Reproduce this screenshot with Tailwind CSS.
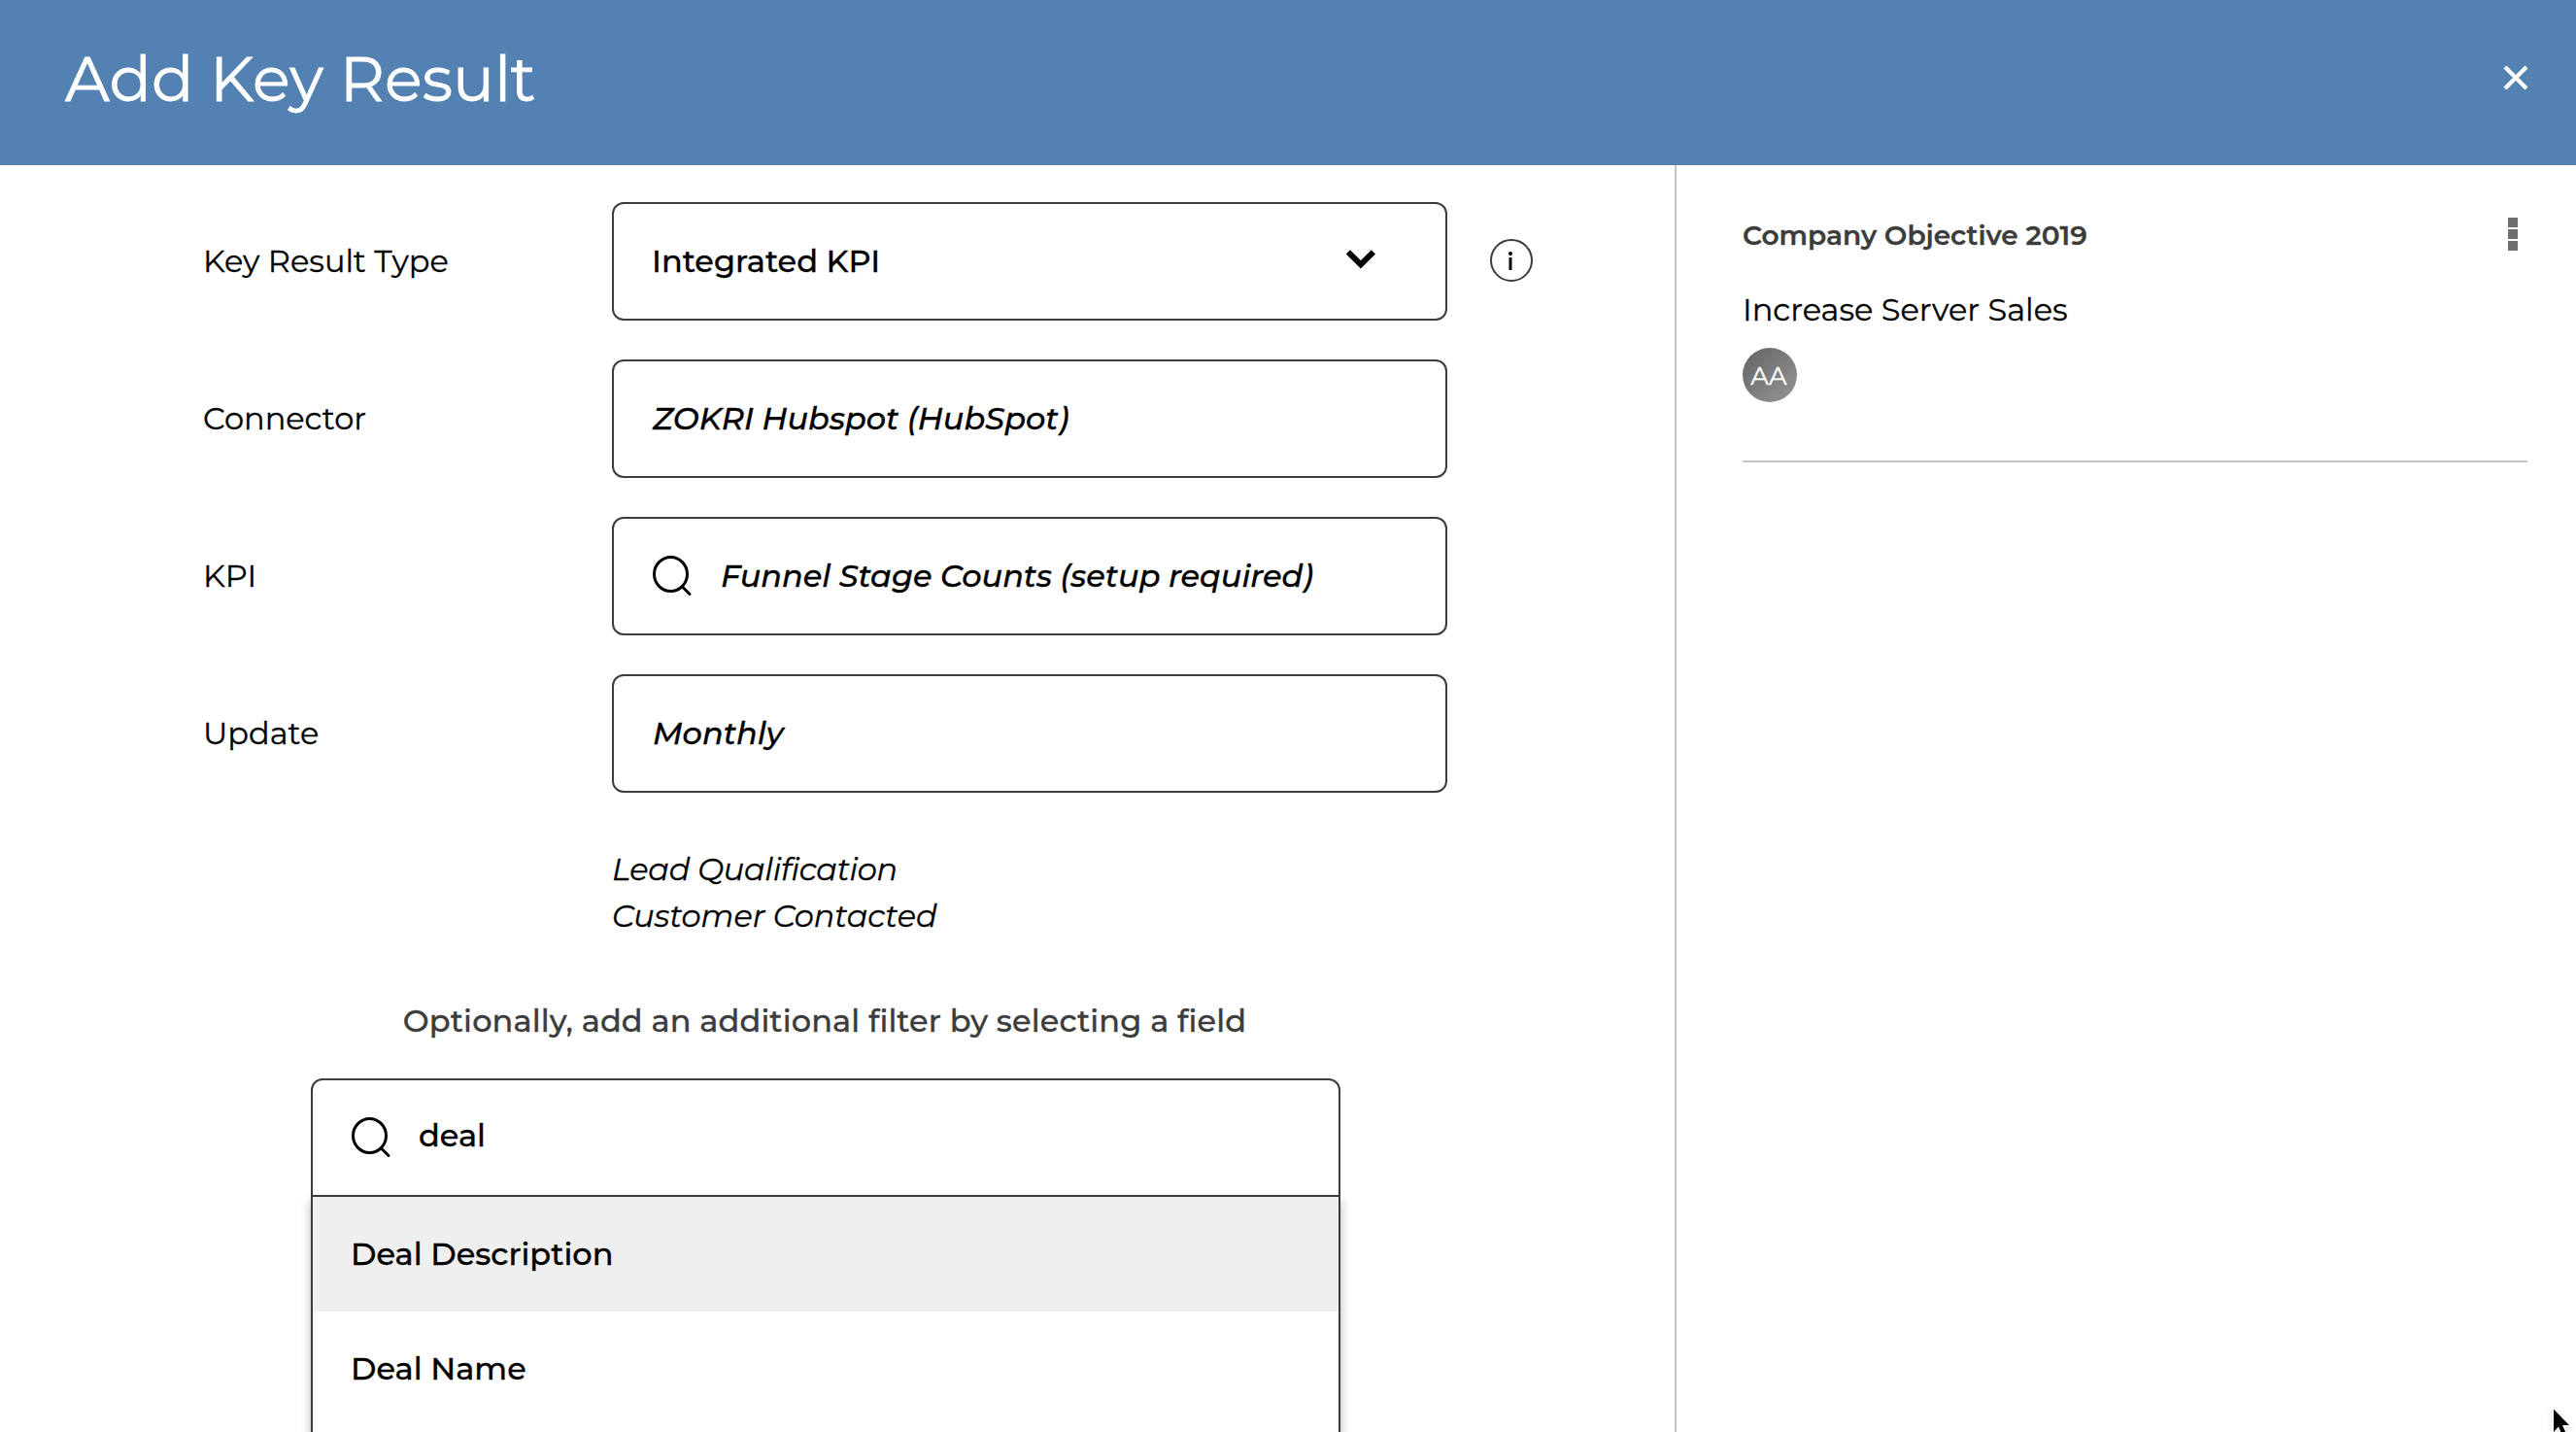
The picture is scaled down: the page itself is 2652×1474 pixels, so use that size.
<!DOCTYPE html>
<html lang="en">

<head>
  <meta charset="utf-8">
  <title>Add Key Result</title>
  <meta name="viewport" content="width=device-width, initial-scale=1.0">
  <script src="https://cdn.jsdelivr.net/npm/@tailwindcss/browser@4"></script>
</head>

<body class="h-screen overflow-hidden flex flex-col bg-white text-black font-[Montserrat,Inter,sans-serif] text-[32px] leading-[48px] [-webkit-text-stroke:0.3px]">

  <!-- Header -->
  <header class="h-[170px] shrink-0 bg-[#5381b1] text-white flex items-start justify-between pl-[67px] pr-[48px]">
    <h1 class="mt-[41px] text-[64px] leading-[80px] whitespace-nowrap [-webkit-text-stroke:0.8px]">Add Key Result</h1>
    <button class="mt-[66px]" aria-label="Close">
      <svg class="w-7 h-7" viewBox="0 0 28 28" fill="none" stroke="currentColor" stroke-width="4.200"><path d="M3 3l22 22M25 3L3 25"/></svg>
    </button>
  </header>

  <main class="flex flex-1 min-h-0 overflow-hidden">
    <!-- Form -->
    <section class="w-[1724px] h-full overflow-hidden shrink-0 pt-[38px]">
      <div class="flex flex-col gap-10 pl-[209px]">
        <div class="flex items-center">
          <label class="w-[421px]">Key Result Type</label>
          <div class="w-[860px] h-[122px] border-2 border-[#3c3c3c] rounded-[12px] flex items-center justify-between pl-[39px] pr-[71px] font-medium">
            <span>Integrated KPI</span>
            <svg class="w-8 h-6 mb-1" viewBox="0 0 32 24" fill="none" stroke="currentColor" stroke-width="6"><path d="M2.900 4.300l13 13 13-13"/></svg>
          </div>
          <svg class="w-11 h-11 ml-[44px] mb-[2px]" viewBox="0 0 44 44" fill="none" stroke="#3c3c3c" stroke-width="2"><circle cx="22" cy="22" r="21"/><path d="M21 19v13" stroke="#000" stroke-width="3"/><circle cx="21" cy="15" r="2" fill="#000" stroke="none"/></svg>
        </div>

        <div class="flex items-center">
          <label class="w-[421px]">Connector</label>
          <div class="w-[860px] h-[122px] border-2 border-[#3c3c3c] rounded-[12px] flex items-center pl-[40px] font-medium italic">
            <span>ZOKRI Hubspot (HubSpot)</span>
          </div>
        </div>

        <div class="flex items-center">
          <label class="w-[421px]">KPI</label>
          <div class="w-[860px] h-[122px] border-2 border-[#3c3c3c] rounded-[12px] flex items-center pl-[39px] font-medium italic">
            <svg class="w-[42px] h-[42px] mr-[29px]" viewBox="0 0 42 42" fill="none" stroke="currentColor" stroke-width="3" stroke-linecap="round"><ellipse cx="19.500" cy="19" rx="17" ry="17.500"/><path d="M31.500 32l7.500 7.500"/></svg>
            <span class="tracking-[-0.07px]">Funnel Stage Counts (setup required)</span>
          </div>
        </div>

        <div class="flex items-center">
          <label class="w-[421px]">Update</label>
          <div class="w-[860px] h-[122px] border-2 border-[#3c3c3c] rounded-[12px] flex items-center pl-[40px] font-medium italic">
            <span>Monthly</span>
          </div>
        </div>
      </div>

      <!-- Selected stages -->
      <ul class="mt-[55px] ml-[630px] italic">
        <li class="tracking-[-0.3px]">Lead Qualification</li>
        <li class="tracking-[-0.1px]">Customer Contacted</li>
      </ul>

      <!-- Filter field -->
      <div class="w-[1060px] ml-[320px] mt-[60px]">
        <p class="text-center font-medium text-[#3c3c3c] tracking-[0.1px] pr-[2px]">Optionally, add an additional filter by selecting a field</p>
        <div class="mt-[35px] h-[122px] border-2 border-[#3c3c3c] rounded-t-[12px] flex items-center pl-[39px] font-medium">
          <svg class="w-[42px] h-[42px] mr-[28px]" viewBox="0 0 42 42" fill="none" stroke="currentColor" stroke-width="3" stroke-linecap="round"><ellipse cx="19.500" cy="19" rx="17" ry="17.500"/><path d="M31.500 32l7.500 7.500"/></svg>
          <span class="mb-1">deal</span>
        </div>
        <ul class="border-x-2 border-[#3c3c3c] h-[400px] font-medium shadow-[0_4px_10px_rgba(0,0,0,0.3)]">
          <li class="h-[118px] pl-[39px] flex items-center bg-[#efefef]">Deal Description</li>
          <li class="h-[118px] pl-[39px] flex items-center">Deal Name</li>
        </ul>
      </div>
    </section>

    <!-- Parent objective -->
    <aside class="flex-1 border-l-2 border-[#c4c4c4] pl-[68px] pr-[50px]">
      <div class="h-[306px] border-b-2 border-[#c4c4c4]">
        <div class="flex justify-between pt-[48px]">
          <h2 class="font-semibold text-[28px] text-[#3c3c3c]">Company Objective 2019</h2>
          <div class="flex flex-col gap-[2px] mt-[6px] mr-[10px]">
            <i class="w-[10px] h-[10px] bg-[#6f6f6f]"></i>
            <i class="w-[10px] h-[10px] bg-[#6f6f6f]"></i>
            <i class="w-[10px] h-[10px] bg-[#6f6f6f]"></i>
          </div>
        </div>
        <p class="mt-[29px]">Increase Server Sales</p>
        <div class="mt-[15px] w-14 h-14 pt-[2px] pr-[2px] rounded-full bg-linear-to-br from-[#646464] to-[#969696] text-white text-[26px] flex items-center justify-center">AA</div>
      </div>
    </aside>
  </main>

  <!-- Mouse pointer -->
  <svg class="absolute left-[2624px] top-[1442px] w-7 h-8 drop-shadow-md" viewBox="0 0 28 32"><path d="M5 8.500V32l5-5.500 4.500 10.500 4-2-4.500-10H21z" fill="#000" stroke="#fff" stroke-width="3" paint-order="stroke"/></svg>
</body>
</html>
